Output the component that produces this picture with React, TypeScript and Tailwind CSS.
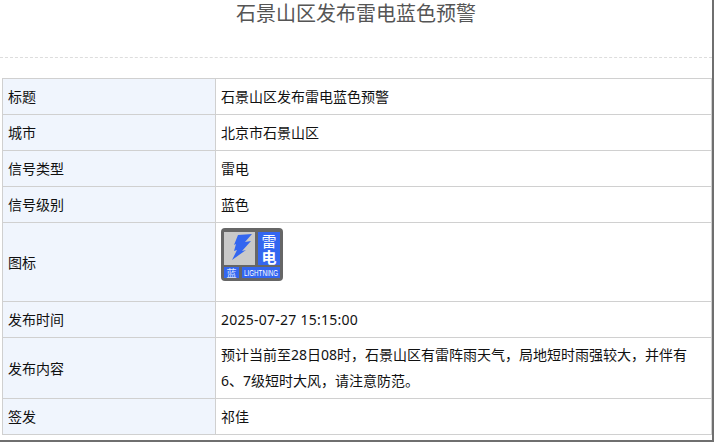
const font = "font-['Noto_Sans','Noto_Sans_CJK_SC',sans-serif]"

const rows: { label: string; value: string }[] = [
  { label: "标题", value: "石景山区发布雷电蓝色预警" },
  { label: "城市", value: "北京市石景山区" },
  { label: "信号类型", value: "雷电" },
  { label: "信号级别", value: "蓝色" },
]

function LightningIcon() {
  return (
    <svg width="62" height="53" viewBox="0 0 62 53" className="block">
      <rect width="62" height="53" rx="4" fill="#666" />
      <rect x="3" y="4" width="31" height="33" fill="#c9c9c9" />
      <rect x="37" y="4" width="22" height="33" fill="#3366f0" />
      <rect x="3" y="39" width="15" height="11" fill="#3366f0" />
      <rect x="21" y="39" width="38" height="11" fill="#3366f0" />
      <path d="M17 7 L31 6 L24 14 L30 13 L21 23 L25 22 L11 32 L16 22 L13 23 L15 16 L13 17 Z" fill="#3366f0" />
      <text x="48" y="18.5" textAnchor="middle" fontSize="15" fill="#fff" fontFamily="Noto Sans CJK SC">雷</text>
      <text x="48" y="34.5" textAnchor="middle" fontSize="15" fontWeight="700" fill="#fff" fontFamily="Noto Sans CJK SC">电</text>
      <text x="10.5" y="48.5" textAnchor="middle" fontSize="10" fill="#dfe7ff" fontFamily="Noto Sans CJK SC">蓝</text>
      <text x="40" y="47.5" textAnchor="middle" fontSize="9" fill="#fff" fontFamily="Liberation Sans" textLength="34" lengthAdjust="spacingAndGlyphs">LIGHTNING</text>
    </svg>
  )
}

function Row({ label, children, className }: { label: string; children: React.ReactNode; className: string }) {
  return (
    <tr className={className}>
      <td className="w-[213px] border border-[#d0d0d0] bg-[#f0f5fd] px-[5px] align-middle">{label}</td>
      {children}
    </tr>
  )
}

const valueCell = "border border-[#d0d0d0] px-[5px] align-middle"

export default function App() {
  return (
    <div className={`${font} h-[442px] w-[714px] overflow-hidden border-r-2 border-b-2 border-[#6f6f6f] bg-white text-[14px] text-[#111]`}>
      <h1 className="pt-[2px] text-center text-[20px] leading-[24px] font-normal text-[#555]">石景山区发布雷电蓝色预警</h1>
      <div className="mt-[31px] border-t border-dashed border-[#ddd]" />
      <table className="mt-[20px] ml-[2px] w-[710px] table-fixed border-collapse">
        <tbody>
          {rows.map((r) => (
            <Row key={r.label} label={r.label} className="h-[36px]">
              <td className={valueCell}>{r.value}</td>
            </Row>
          ))}
          <Row label="图标" className="h-[79px]">
            <td className="border border-[#d0d0d0] px-[5px] pt-[5px] pb-[20px] align-top">
              <LightningIcon />
            </td>
          </Row>
          <Row label="发布时间" className="h-[36px]">
            <td className={valueCell}>
              <span className="tracking-[0.25px]">2025-07-27 15:15:00</span>
            </td>
          </Row>
          <Row label="发布内容" className="h-[61px]">
            <td className={valueCell}>
              <p className="leading-[26px]">预计当前至28日08时，石景山区有雷阵雨天气，局地短时雨强较大，并伴有6、7级短时大风，请注意防范。</p>
            </td>
          </Row>
          <Row label="签发" className="h-[36px]">
            <td className={valueCell}>祁佳</td>
          </Row>
        </tbody>
      </table>
    </div>
  )
}
